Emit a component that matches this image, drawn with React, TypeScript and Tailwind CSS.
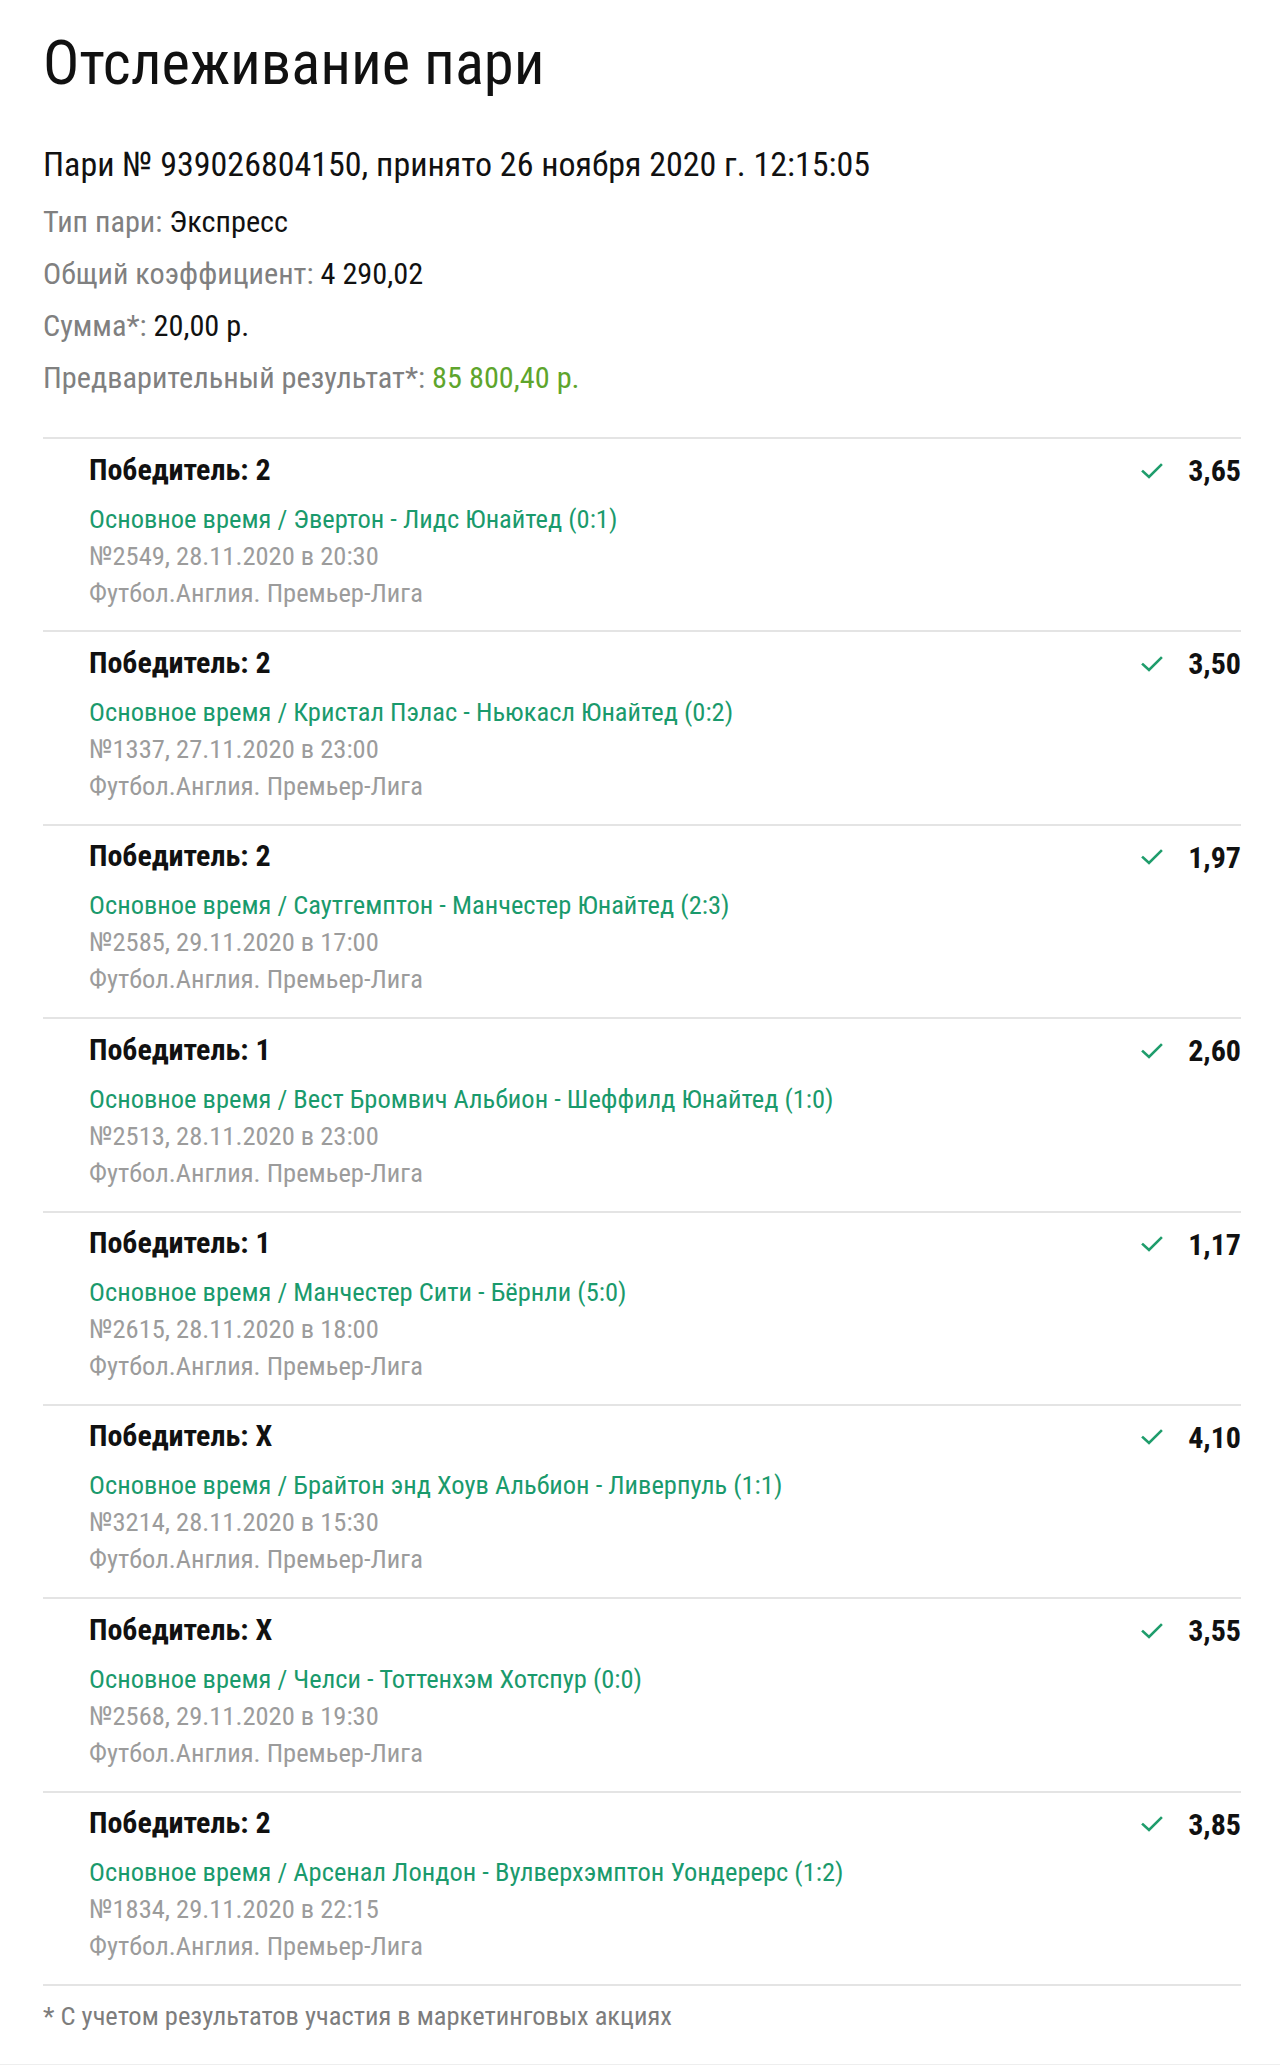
import React from "react";

const rows = [
  { pick: "Победитель: 2", odds: "3,65", match: "Основное время / Эвертон - Лидс Юнайтед (0:1)", meta: "№2549, 28.11.2020 в 20:30" },
  { pick: "Победитель: 2", odds: "3,50", match: "Основное время / Кристал Пэлас - Ньюкасл Юнайтед (0:2)", meta: "№1337, 27.11.2020 в 23:00" },
  { pick: "Победитель: 2", odds: "1,97", match: "Основное время / Саутгемптон - Манчестер Юнайтед (2:3)", meta: "№2585, 29.11.2020 в 17:00" },
  { pick: "Победитель: 1", odds: "2,60", match: "Основное время / Вест Бромвич Альбион - Шеффилд Юнайтед (1:0)", meta: "№2513, 28.11.2020 в 23:00" },
  { pick: "Победитель: 1", odds: "1,17", match: "Основное время / Манчестер Сити - Бёрнли (5:0)", meta: "№2615, 28.11.2020 в 18:00" },
  { pick: "Победитель: X", odds: "4,10", match: "Основное время / Брайтон энд Хоув Альбион - Ливерпуль (1:1)", meta: "№3214, 28.11.2020 в 15:30" },
  { pick: "Победитель: X", odds: "3,55", match: "Основное время / Челси - Тоттенхэм Хотспур (0:0)", meta: "№2568, 29.11.2020 в 19:30" },
  { pick: "Победитель: 2", odds: "3,85", match: "Основное время / Арсенал Лондон - Вулверхэмптон Уондерерс (1:2)", meta: "№1834, 29.11.2020 в 22:15" },
];

function Check() {
  return (
    <svg width="22" height="16" viewBox="0 0 22 16" fill="none">
      <path d="M2 8.5 L8 14 L20 2" stroke="#1f9d6c" strokeWidth="2.6" strokeLinecap="square" />
    </svg>
  );
}

export default function App() {
  return (
    <div className="h-[2065px] flex flex-col bg-white font-['Roboto_Condensed','Roboto',sans-serif] text-[#111]">
      <div className="ml-[43px] mr-[39px] pt-[31px]">
        <h1 className="text-[60.5px] leading-[66px] font-normal">Отслеживание пари</h1>
        <div className="mt-[46px] text-[34px] leading-[42px]">Пари № 939026804150, принято 26 ноября 2020 г. 12:15:05</div>
        <div className="mt-[11px] mb-[33px] text-[30.3px] leading-[52px]">
          <div><span className="text-[#808080]">Тип пари: </span>Экспресс</div>
          <div><span className="text-[#808080]">Общий коэффициент: </span>4 290,02</div>
          <div><span className="text-[#808080]">Сумма*: </span>20,00 р.</div>
          <div><span className="text-[#808080]">Предварительный результат*: </span><span className="text-[#5ea52c]">85 800,40 р.</span></div>
        </div>
        <div>
          {rows.map((r, i) => (
            <div key={i} className="border-t-2 border-[#e4e4e4] pl-[46px] pt-[11.5px] pb-[19.9px] flex justify-between">
              <div>
                <div className="text-[30px] leading-[38px] font-bold">{r.pick}</div>
                <div className="mt-[11px] text-[26.5px] leading-[37px]">
                  <div className="text-[#1a9a6c]">{r.match}</div>
                  <div className="text-[#9c9c9c]">{r.meta}</div>
                  <div className="text-[#9c9c9c]">Футбол.Англия. Премьер-Лига</div>
                </div>
              </div>
              <div className="flex items-center h-[38px] gap-[25px] pt-[2px]">
                <Check />
                <span className="text-[30px] font-bold">{r.odds}</span>
              </div>
            </div>
          ))}
          <div className="border-t-2 border-[#e4e4e4] pt-[14px] text-[26.5px] leading-[32px] text-[#7d7d7d]">
            * С учетом результатов участия в маркетинговых акциях
          </div>
        </div>
      </div>
      <div className="mt-auto h-px bg-[#eeeeee]" />
    </div>
  );
}
